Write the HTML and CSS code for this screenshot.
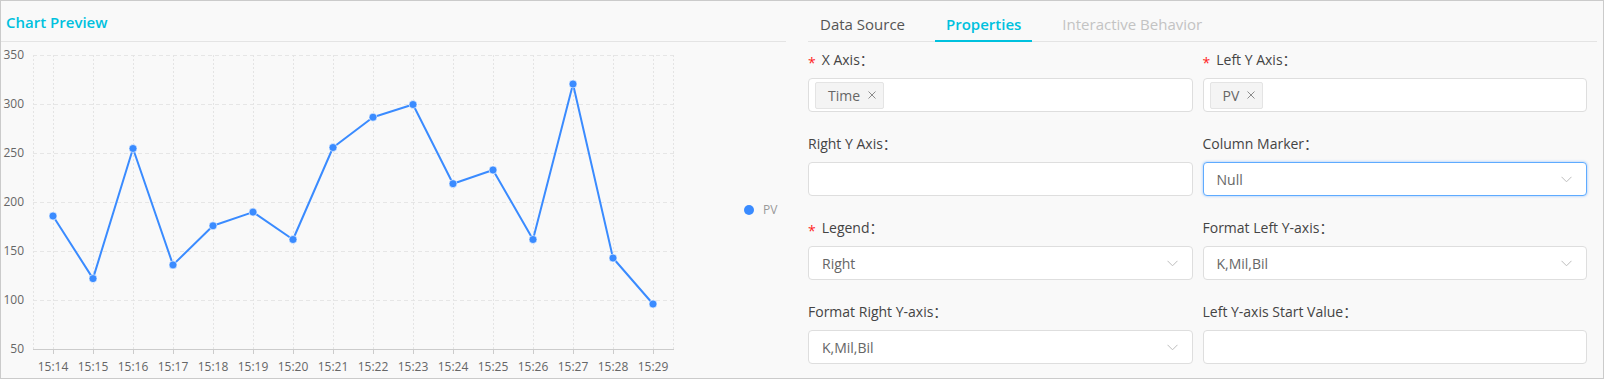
FILE: index.html
```html
<!DOCTYPE html>
<html lang="en">
<head>
<meta charset="utf-8">
<title>Chart Preview</title>
<link rel="stylesheet" href="styles.css">
</head>
<body>
<div class="frame">
  <section class="preview">
    <h2 class="preview-title">Chart Preview</h2>
    <svg class="chart" width="785" height="336" viewBox="1 42 785 336" xmlns="http://www.w3.org/2000/svg">
      <g class="grid-h">
        <line x1="33" y1="55.5" x2="674" y2="55.5"/>
        <line x1="33" y1="104.5" x2="674" y2="104.5"/>
        <line x1="33" y1="153.5" x2="674" y2="153.5"/>
        <line x1="33" y1="202.5" x2="674" y2="202.5"/>
        <line x1="33" y1="251.5" x2="674" y2="251.5"/>
        <line x1="33" y1="300.5" x2="674" y2="300.5"/>
      </g>
      <g class="grid-v">
        <line x1="33.5" y1="55" x2="33.5" y2="349"/>
        <line x1="53.5" y1="55" x2="53.5" y2="349"/>
        <line x1="93.5" y1="55" x2="93.5" y2="349"/>
        <line x1="133.5" y1="55" x2="133.5" y2="349"/>
        <line x1="173.5" y1="55" x2="173.5" y2="349"/>
        <line x1="213.5" y1="55" x2="213.5" y2="349"/>
        <line x1="253.5" y1="55" x2="253.5" y2="349"/>
        <line x1="293.5" y1="55" x2="293.5" y2="349"/>
        <line x1="333.5" y1="55" x2="333.5" y2="349"/>
        <line x1="373.5" y1="55" x2="373.5" y2="349"/>
        <line x1="413.5" y1="55" x2="413.5" y2="349"/>
        <line x1="453.5" y1="55" x2="453.5" y2="349"/>
        <line x1="493.5" y1="55" x2="493.5" y2="349"/>
        <line x1="533.5" y1="55" x2="533.5" y2="349"/>
        <line x1="573.5" y1="55" x2="573.5" y2="349"/>
        <line x1="613.5" y1="55" x2="613.5" y2="349"/>
        <line x1="653.5" y1="55" x2="653.5" y2="349"/>
        <line x1="673.5" y1="55" x2="673.5" y2="349"/>
      </g>
      <line class="axis" x1="33" y1="349.5" x2="674" y2="349.5"/>
      <g class="ticks">
        <line x1="53.5" y1="350" x2="53.5" y2="354"/>
        <line x1="93.5" y1="350" x2="93.5" y2="354"/>
        <line x1="133.5" y1="350" x2="133.5" y2="354"/>
        <line x1="173.5" y1="350" x2="173.5" y2="354"/>
        <line x1="213.5" y1="350" x2="213.5" y2="354"/>
        <line x1="253.5" y1="350" x2="253.5" y2="354"/>
        <line x1="293.5" y1="350" x2="293.5" y2="354"/>
        <line x1="333.5" y1="350" x2="333.5" y2="354"/>
        <line x1="373.5" y1="350" x2="373.5" y2="354"/>
        <line x1="413.5" y1="350" x2="413.5" y2="354"/>
        <line x1="453.5" y1="350" x2="453.5" y2="354"/>
        <line x1="493.5" y1="350" x2="493.5" y2="354"/>
        <line x1="533.5" y1="350" x2="533.5" y2="354"/>
        <line x1="573.5" y1="350" x2="573.5" y2="354"/>
        <line x1="613.5" y1="350" x2="613.5" y2="354"/>
        <line x1="653.5" y1="350" x2="653.5" y2="354"/>
      </g>
      <g class="y-labels">
        <text x="24" y="56">350</text>
        <text x="24" y="105">300</text>
        <text x="24" y="154">250</text>
        <text x="24" y="203">200</text>
        <text x="24" y="252">150</text>
        <text x="24" y="301">100</text>
        <text x="24" y="350">50</text>
      </g>
      <g class="x-labels">
        <text x="53" y="368">15:14</text>
        <text x="93" y="368">15:15</text>
        <text x="133" y="368">15:16</text>
        <text x="173" y="368">15:17</text>
        <text x="213" y="368">15:18</text>
        <text x="253" y="368">15:19</text>
        <text x="293" y="368">15:20</text>
        <text x="333" y="368">15:21</text>
        <text x="373" y="368">15:22</text>
        <text x="413" y="368">15:23</text>
        <text x="453" y="368">15:24</text>
        <text x="493" y="368">15:25</text>
        <text x="533" y="368">15:26</text>
        <text x="573" y="368">15:27</text>
        <text x="613" y="368">15:28</text>
        <text x="653" y="368">15:29</text>
      </g>
      <polyline class="series" points="53,216 93,278.6 133,148.5 173,264.9 213,225.8 253,212.1 293,239.5 333,147.5 373,117.2 413,104.5 453,183.7 493,170 533,239.5 573,84 613,258 653,304"/>
      <g class="dots">
        <circle cx="53" cy="216" r="4"/>
        <circle cx="93" cy="278.6" r="4"/>
        <circle cx="133" cy="148.5" r="4"/>
        <circle cx="173" cy="264.9" r="4"/>
        <circle cx="213" cy="225.8" r="4"/>
        <circle cx="253" cy="212.1" r="4"/>
        <circle cx="293" cy="239.5" r="4"/>
        <circle cx="333" cy="147.5" r="4"/>
        <circle cx="373" cy="117.2" r="4"/>
        <circle cx="413" cy="104.5" r="4"/>
        <circle cx="453" cy="183.7" r="4"/>
        <circle cx="493" cy="170" r="4"/>
        <circle cx="533" cy="239.5" r="4"/>
        <circle cx="573" cy="84" r="4"/>
        <circle cx="613" cy="258" r="4"/>
        <circle cx="653" cy="304" r="4"/>
      </g>
      <g class="legend">
        <circle cx="749" cy="210" r="5"/>
        <text x="763" y="211">PV</text>
      </g>
    </svg>
  </section>

  <section class="props">
    <nav class="tabs">
      <span class="tab">Data Source</span>
      <span class="tab active">Properties</span>
      <span class="tab disabled">Interactive Behavior</span>
    </nav>
    <div class="form">
      <div class="field">
        <label class="field-label"><span class="req">*</span>X Axis：</label>
        <div class="input tags">
          <span class="tag">Time<svg class="tag-x" width="8" height="8" viewBox="0 0 8 8"><path d="M0.5 0.5 L7.5 7.5 M7.5 0.5 L0.5 7.5"/></svg></span>
        </div>
      </div>
      <div class="field">
        <label class="field-label"><span class="req">*</span>Left Y Axis：</label>
        <div class="input tags">
          <span class="tag">PV<svg class="tag-x" width="8" height="8" viewBox="0 0 8 8"><path d="M0.5 0.5 L7.5 7.5 M7.5 0.5 L0.5 7.5"/></svg></span>
        </div>
      </div>
      <div class="field">
        <label class="field-label">Right Y Axis：</label>
        <div class="input"></div>
      </div>
      <div class="field">
        <label class="field-label">Column Marker：</label>
        <div class="input select focused">
          <span>Null</span>
          <svg class="chevron" width="11" height="7" viewBox="0 0 11 7"><path d="M0.5 0.8 L5.5 5.8 L10.5 0.8"/></svg>
        </div>
      </div>
      <div class="field">
        <label class="field-label"><span class="req">*</span>Legend：</label>
        <div class="input select">
          <span>Right</span>
          <svg class="chevron" width="11" height="7" viewBox="0 0 11 7"><path d="M0.5 0.8 L5.5 5.8 L10.5 0.8"/></svg>
        </div>
      </div>
      <div class="field">
        <label class="field-label">Format Left Y-axis：</label>
        <div class="input select">
          <span>K,Mil,Bil</span>
          <svg class="chevron" width="11" height="7" viewBox="0 0 11 7"><path d="M0.5 0.8 L5.5 5.8 L10.5 0.8"/></svg>
        </div>
      </div>
      <div class="field">
        <label class="field-label">Format Right Y-axis：</label>
        <div class="input select">
          <span>K,Mil,Bil</span>
          <svg class="chevron" width="11" height="7" viewBox="0 0 11 7"><path d="M0.5 0.8 L5.5 5.8 L10.5 0.8"/></svg>
        </div>
      </div>
      <div class="field">
        <label class="field-label">Left Y-axis Start Value：</label>
        <div class="input"></div>
      </div>
    </div>
  </section>
</div>
</body>
</html>
```

FILE: styles.css
```css
html, body {
  margin: 0;
  padding: 0;
  background: #ffffff;
}

body {
  font-family: "Open Sans", "Noto Sans CJK SC", sans-serif;
  color: #333333;
}

.frame {
  width: 1604px;
  height: 379px;
  box-sizing: border-box;
  border: 1px solid #cbcbcb;
  background: #f9f9f9;
  display: flex;
  overflow: hidden;
}

/* ---------- chart preview ---------- */
.preview {
  width: 785px;
  flex: none;
  display: flex;
  flex-direction: column;
}

.preview-title {
  margin: 0;
  padding: 1px 0 0 5px;
  box-sizing: border-box;
  height: 41px;
  line-height: 40px;
  border-bottom: 1px solid #e4e4e4;
  color: #00c1de;
  font-size: 15px;
  font-weight: 600;
}

.chart {
  display: block;
}

.grid-h line {
  stroke: #e6e6e6;
  stroke-width: 1;
  stroke-dasharray: 4 3;
}

.grid-v line {
  stroke: #e4e4e4;
  stroke-width: 1;
  stroke-dasharray: 2 2;
}

.axis {
  stroke: #cccccc;
  stroke-width: 1;
}

.ticks line {
  stroke: #cccccc;
  stroke-width: 1;
}

.y-labels text,
.x-labels text {
  font-family: "Open Sans", sans-serif;
  font-size: 12px;
  fill: #666666;
  dominant-baseline: middle;
}

.y-labels text {
  text-anchor: end;
}

.x-labels text {
  text-anchor: middle;
}

.series {
  fill: none;
  stroke: #3a8bff;
  stroke-width: 2;
  stroke-linejoin: round;
}

.dots circle {
  fill: #3a8bff;
  stroke: #ffffff;
  stroke-width: 0.6;
}

.legend circle {
  fill: #3a8bff;
}

.legend text {
  font-family: "Open Sans", sans-serif;
  font-size: 12px;
  fill: #999999;
  dominant-baseline: middle;
}

/* ---------- properties ---------- */
.props {
  width: 789px;
  flex: none;
  margin-left: 22px;
  display: flex;
  flex-direction: column;
}

.tabs {
  height: 41px;
  box-sizing: border-box;
  border-bottom: 1px solid #e4e4e4;
  display: flex;
  align-items: flex-start;
  gap: 19px;
}

.tab {
  box-sizing: border-box;
  height: 41px;
  padding: 13px 11px 0 11px;
  line-height: 20px;
  font-size: 15px;
  color: #555555;
  border-bottom: 2px solid transparent;
  white-space: nowrap;
}

.tab:first-child {
  padding-left: 12px;
}

.tab.active {
  color: #00c1de;
  font-weight: 600;
  border-bottom-color: #00c1de;
}

.tab.disabled {
  color: #c3c3c3;
}

.form {
  display: grid;
  grid-template-columns: 1fr 1fr;
  row-gap: 22px;
  padding-top: 8px;
}

.field {
  padding-right: 10px;
  display: flex;
  flex-direction: column;
}

.field-label {
  display: block;
  height: 20px;
  line-height: 20px;
  margin-bottom: 8px;
  font-size: 14px;
  color: #444444;
  white-space: nowrap;
}

.req {
  color: #ff1f1f;
  margin-right: 6px;
  vertical-align: -3px;
}

.input {
  height: 34px;
  box-sizing: border-box;
  border: 1px solid #dedede;
  border-radius: 4px;
  background: #ffffff;
  display: flex;
  align-items: center;
  padding: 0 14px 0 13px;
  font-size: 14px;
  color: #666666;
}

.input.tags {
  padding-left: 6px;
}

.input.select {
  justify-content: space-between;
}

.input.focused {
  border-color: #5eabff;
  box-shadow: 0 0 2px 1px rgba(60, 145, 255, 0.25);
}

.tag {
  height: 27px;
  box-sizing: border-box;
  border: 1px solid #e4e4e4;
  border-radius: 2px;
  background: #f4f4f4;
  display: inline-flex;
  align-items: center;
  gap: 8px;
  padding: 0 7px 0 12px;
  font-size: 14px;
  color: #666666;
}

.tag-x path {
  stroke: #8c8c8c;
  stroke-width: 1;
  fill: none;
}

.chevron path {
  stroke: #bdbdbd;
  stroke-width: 1;
  fill: none;
}
```
